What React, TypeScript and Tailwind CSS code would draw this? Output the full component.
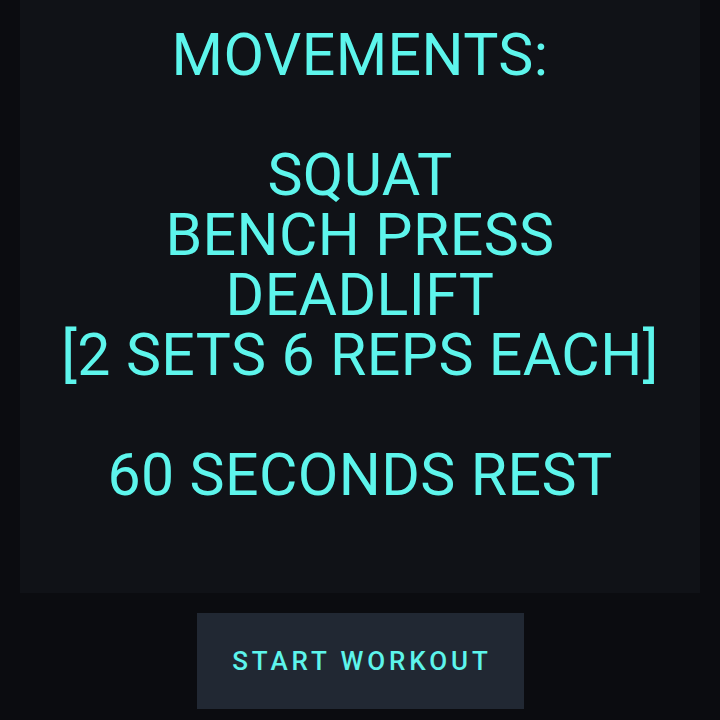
export default function App() {
  const lines = [
    "MOVEMENTS:",
    "",
    "SQUAT",
    "BENCH PRESS",
    "DEADLIFT",
    "[2 SETS 6 REPS EACH]",
    "",
    "60 SECONDS REST",
  ];
  return (
    <div className="w-[720px] h-[720px] bg-[#0b0c10] flex flex-col items-center overflow-hidden" style={{ fontFamily: "Roboto, 'DejaVu Sans', sans-serif" }}>
      <div className="w-[680px] h-[593px] bg-[#101217] pt-[25px] flex flex-col items-center text-[#5df5ec] text-[59px] leading-[60px] tracking-[0.4px] whitespace-nowrap">
        {lines.map((l, i) => (
          <div key={i} className="h-[60px]">{l}</div>
        ))}
      </div>
      <button className="mt-[20px] w-[327px] h-[96px] bg-[#212833] text-[#5df5ec] text-[26px] font-medium tracking-[0.15em] flex items-center justify-center pl-[0.15em]">
        START WORKOUT
      </button>
    </div>
  );
}
